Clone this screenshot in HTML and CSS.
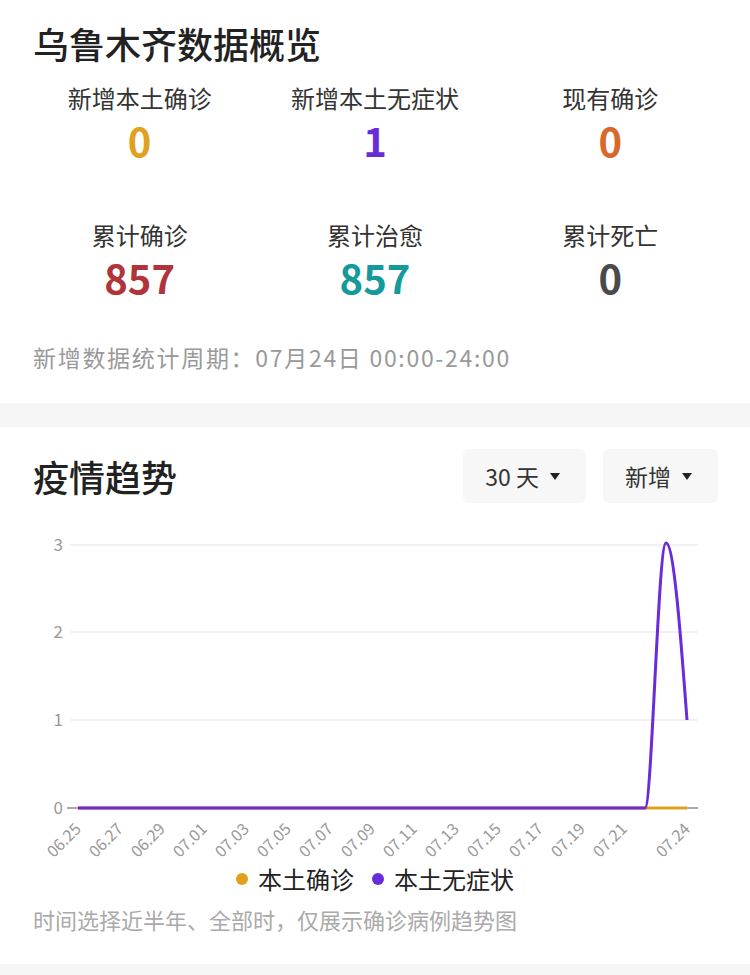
FILE: index.html
```html
<!DOCTYPE html>
<html>
<head>
  <meta charset="UTF-8">
  <title>乌鲁木齐数据概览</title>
  <link rel="stylesheet" href="styles.css">
</head>
<body>
  <section class="overview">
    <h1 class="section-title">乌鲁木齐数据概览</h1>

    <div class="stats">
      <div class="stat">
        <span class="stat-label">新增本土确诊</span>
        <span class="stat-value c-yellow">0</span>
      </div>
      <div class="stat">
        <span class="stat-label">新增本土无症状</span>
        <span class="stat-value c-purple">1</span>
      </div>
      <div class="stat">
        <span class="stat-label">现有确诊</span>
        <span class="stat-value c-orange">0</span>
      </div>
      <div class="stat">
        <span class="stat-label">累计确诊</span>
        <span class="stat-value c-red">857</span>
      </div>
      <div class="stat">
        <span class="stat-label">累计治愈</span>
        <span class="stat-value c-teal">857</span>
      </div>
      <div class="stat">
        <span class="stat-label">累计死亡</span>
        <span class="stat-value c-gray">0</span>
      </div>
    </div>

    <p class="period">新增数据统计周期：07月24日 00:00-24:00</p>
  </section>

  <div class="divider"></div>

  <section class="trend">
    <div class="trend-header">
      <h2 class="section-title">疫情趋势</h2>
      <div class="filters">
        <button class="filter">30 天 <span class="caret"></span></button>
        <button class="filter">新增 <span class="caret"></span></button>
      </div>
    </div>

    <svg class="chart" width="750" height="356" viewBox="0 0 750 356">
      <!-- grid -->
      <g class="grid">
        <line x1="70" y1="35" x2="698" y2="35"/>
        <line x1="70" y1="122" x2="698" y2="122"/>
        <line x1="70" y1="210" x2="698" y2="210"/>
      </g>
      <line class="axis" x1="67" y1="298" x2="698" y2="298"/>
      <g class="y-labels">
        <text x="63" y="41">3</text>
        <text x="63" y="128">2</text>
        <text x="63" y="216">1</text>
        <text x="63" y="304">0</text>
      </g>

      <!-- series -->
      <path class="line-confirmed" d="M78 298 L687 298"/>
      <path class="line-asym" d="M78 298 L645 298 C652 298 658 33 666 33 C674 33 681 130 687 210"/>

      <g class="x-labels" id="x-labels"></g>
    </svg>

    <div class="legend">
      <span class="legend-item"><i class="dot dot-yellow"></i>本土确诊</span>
      <span class="legend-item"><i class="dot dot-purple"></i>本土无症状</span>
    </div>

    <p class="note">时间选择近半年、全部时，仅展示确诊病例趋势图</p>
  </section>

  <div class="divider bottom"></div>

  <script>
    // x axis labels, every other day plus the last one
    const labels = [
      [0, '06.25'], [2, '06.27'], [4, '06.29'], [6, '07.01'], [8, '07.03'],
      [10, '07.05'], [12, '07.07'], [14, '07.09'], [16, '07.11'], [18, '07.13'],
      [20, '07.15'], [22, '07.17'], [24, '07.19'], [26, '07.21'], [29, '07.24']
    ];
    const group = document.getElementById('x-labels');
    labels.forEach(([i, text]) => {
      const x = 78 + 21 * i;
      const t = document.createElementNS('http://www.w3.org/2000/svg', 'text');
      t.setAttribute('transform', `translate(${x + 4}, ${320}) rotate(-45)`);
      t.textContent = text;
      group.appendChild(t);
    });
  </script>
</body>
</html>
```

FILE: styles.css
```css
:root {
  --text: #333;
  --muted: #999;
  --yellow: #e0a11f;
  --purple: #6a2bd8;
  --orange: #d8692a;
  --red: #b0343a;
  --teal: #16999a;
  --gray: #4a4a4a;
  --band: #f6f6f6;
}

body {
  margin: 0;
  font-family: "Noto Sans CJK SC", "Noto Sans", sans-serif;
  color: var(--text);
  background: #fff;
}

.section-title {
  margin: 0;
  font-size: 36px;
  line-height: 44px;
  font-weight: 500;
  color: #222;
}

.overview {
  padding: 21px 0 31px;
}

.overview .section-title {
  padding: 0 33px;
}

.stats {
  display: grid;
  grid-template-columns: repeat(3, 1fr);
  row-gap: 56px;
  padding: 0 22px;
  margin-top: 16px;
}

.stat {
  display: flex;
  flex-direction: column;
  align-items: center;
}

.stat-label {
  font-size: 24px;
  line-height: 34px;
  color: #333;
}

.stat-value {
  margin-top: 3px;
  font-size: 40px;
  line-height: 44px;
  font-weight: 700;
}

.c-yellow { color: var(--yellow); }
.c-purple { color: var(--purple); }
.c-orange { color: var(--orange); }
.c-red { color: var(--red); }
.c-teal { color: var(--teal); }
.c-gray { color: var(--gray); }

.period {
  margin: 43px 0 0;
  padding: 0 33px;
  font-size: 23px;
  line-height: 30px;
  letter-spacing: 1.7px;
  color: var(--muted);
}

.divider {
  height: 24px;
  background: var(--band);
}

.divider.bottom {
  height: 12px;
}

.trend {
  padding: 22px 0 30px;
}

.trend-header {
  display: flex;
  align-items: center;
  justify-content: space-between;
  padding: 0 32px 0 33px;
}

.filters {
  display: flex;
  gap: 17px;
}

.filter {
  display: flex;
  align-items: center;
  gap: 11px;
  height: 54px;
  padding: 0 26px 0 22px;
  border: none;
  border-radius: 6px;
  background: #f7f7f7;
  font-family: inherit;
  font-size: 23px;
  color: #333;
}

.caret {
  width: 0;
  height: 0;
  border-left: 5px solid transparent;
  border-right: 5px solid transparent;
  border-top: 7px solid #222;
}

.chart {
  display: block;
  margin-top: 7px;
  overflow: visible;
}

.grid line {
  stroke: #ececec;
  stroke-width: 1.5;
}

.axis {
  stroke: #aaa;
  stroke-width: 2;
}

.y-labels text {
  font-size: 17px;
  fill: var(--muted);
  text-anchor: end;
}

.x-labels text {
  font-size: 16px;
  fill: var(--muted);
  text-anchor: end;
}

.line-confirmed,
.line-asym {
  fill: none;
  stroke-width: 3;
}

.line-confirmed { stroke: var(--yellow); }
.line-asym { stroke: var(--purple); }

.legend {
  display: flex;
  justify-content: center;
  gap: 18px;
  margin-top: -4px;
  font-size: 24px;
  line-height: 34px;
  color: #222;
}

.legend-item {
  display: flex;
  align-items: center;
  gap: 10px;
}

.dot {
  width: 12px;
  height: 12px;
  border-radius: 50%;
}

.dot-yellow { background: var(--yellow); }
.dot-purple { background: var(--purple); }

.note {
  margin: 8px 0 0;
  padding: 0 33px;
  font-size: 22px;
  line-height: 30px;
  color: #aaa;
}
```
